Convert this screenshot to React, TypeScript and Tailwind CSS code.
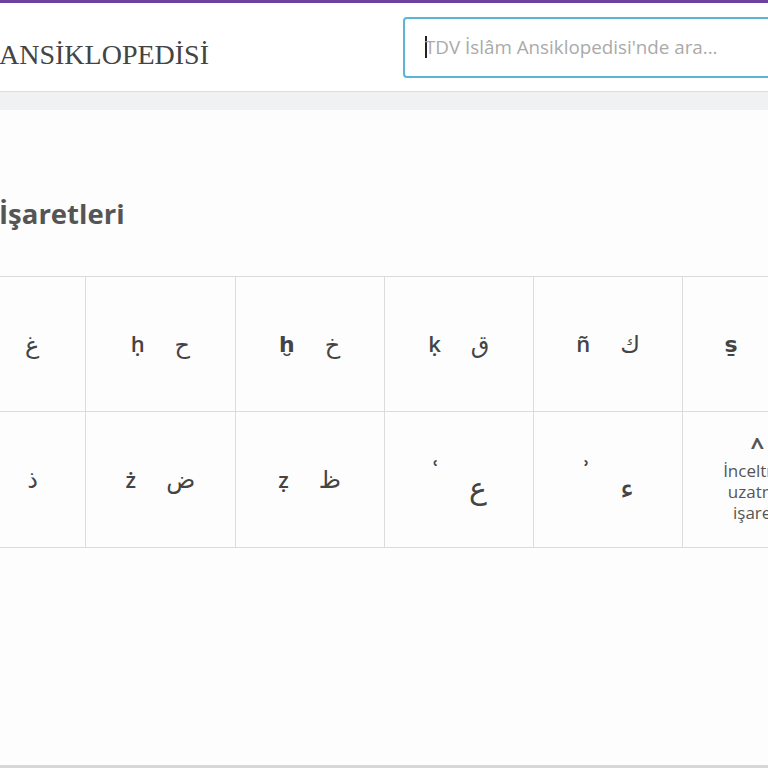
const row1 = [
    { lat: 'ġ', ar: 'غ' },
    { lat: 'ḥ', ar: 'ح' },
    { lat: 'ḫ', ar: 'خ' },
    { lat: 'ḳ', ar: 'ق' },
    { lat: 'ñ', ar: 'ك' },
    { lat: 's̱', ar: 'ث' },
]

const row2 = [
    { lat: 'ẕ', ar: 'ذ' },
    { lat: 'ż', ar: 'ض' },
    { lat: 'ẓ', ar: 'ظ' },
    { lat: 'ʿ', ar: 'ع', raised: true },
    { lat: 'ʾ', ar: 'ء', raised: true },
]

function Cell({ lat, ar, raised }: { lat: string; ar: string; raised?: boolean }) {
    return (
        <div className="w-[149.25px] shrink-0 border-r border-[#dcdcdc] flex items-center justify-center gap-[30px]">
            {raised ? (
                <>
                    <span className="text-[22px] font-semibold text-[#444] -translate-y-[12px]">{lat}</span>
                    <span className="text-[30px] text-[#444] translate-y-[8px]" dir="rtl">{ar}</span>
                </>
            ) : (
                <>
                    <span className="text-[22px] font-semibold text-[#444]">{lat}</span>
                    <span className="text-[24px] text-[#444]" dir="rtl">{ar}</span>
                </>
            )}
        </div>
    )
}

export default function App() {
    return (
        <div className="w-[768px] h-[768px] overflow-hidden bg-[#fdfdfd] flex flex-col" style={{ fontFamily: '"Open Sans", "DejaVu Sans", sans-serif' }}>
            <div className="h-[3px] bg-[#6c41a0] shrink-0" />
            <header className="h-[89px] bg-white flex items-center shrink-0 border-b border-[#dedede] overflow-hidden">
                <div className="w-[403px] shrink-0 pt-[15px]">
                    <span className="text-[28px] text-[#444] -ml-[1px] block" style={{ fontFamily: '"Liberation Serif", serif' }}>
                        ANSİKLOPEDİSİ
                    </span>
                </div>
                <div className="w-[420px] shrink-0 h-[61px] border-2 border-[#5bb5d6] rounded-[4px] bg-white flex items-center pl-[20px]">
                    <span className="w-[2px] h-[22px] bg-[#222] -mr-[2px]" />
                    <span className="text-[18.8px] text-[#aaa]">TDV İslâm Ansiklopedisi'nde ara...</span>
                </div>
            </header>
            <div className="h-[18px] bg-[#f0f1f2] shrink-0" />
            <main className="flex-1 flex flex-col border-b-[3px] border-[#d6d8d8]">
                <h1 className="mt-[90px] text-[27.5px] font-bold text-[#555] leading-none -ml-[1px]">İşaretleri</h1>
                <div className="mt-[48px] -ml-[63px] flex flex-col border-t border-[#dcdcdc] w-[900px]">
                    <div className="h-[135px] flex border-b border-[#dcdcdc]">
                        {row1.map((c, i) => (
                            <Cell key={i} {...c} />
                        ))}
                    </div>
                    <div className="h-[136px] flex border-b border-[#dcdcdc]">
                        {row2.map((c, i) => (
                            <Cell key={i} {...c} />
                        ))}
                        <div className="w-[149.25px] shrink-0 border-r border-[#dcdcdc] flex flex-col items-center justify-center text-[#555]">
                            <span className="text-[24px] font-bold leading-[20px] mb-[4px]">^</span>
                            <span className="text-[17px] leading-[21px] text-center">İnceltme<br />uzatma<br />işareti</span>
                        </div>
                    </div>
                </div>
            </main>
        </div>
    )
}
